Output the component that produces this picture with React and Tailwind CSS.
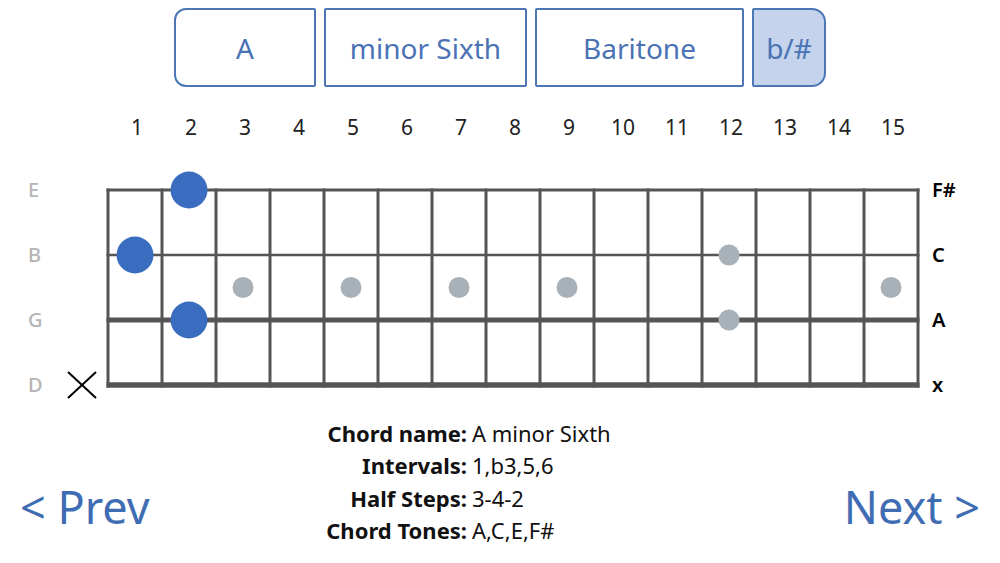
import React from 'react';

const FRETS = Array.from({ length: 15 }, (_, i) => i + 1);
const LEFT_STRINGS = ['E', 'B', 'G', 'D'];
const RIGHT_NOTES = ['F#', 'C', 'A', 'x'];

// svg coords: fretboard starts at x=42, each fret 54 wide, strings every 65
const fx = (f) => 42 + 54 * (f - 0.5);
const STRING_Y = [30, 95, 160, 225];

const fingered = [
  { fret: 2, string: 0 },
  { fret: 1, string: 1 },
  { fret: 2, string: 2 },
];

const inlays = [
  { x: fx(3), y: 127.5 },
  { x: fx(5), y: 127.5 },
  { x: fx(7), y: 127.5 },
  { x: fx(9), y: 127.5 },
  { x: fx(12), y: 95 },
  { x: fx(12), y: 160 },
  { x: fx(15), y: 127.5 },
];

const info = [
  ['Chord name:', 'A minor Sixth'],
  ['Intervals:', '1,b3,5,6'],
  ['Half Steps:', '3-4-2'],
  ['Chord Tones:', 'A,C,E,F#'],
];

function Fretboard() {
  const stringWidths = [3, 2.5, 5, 5.5];
  return (
    <svg width="864" height="240" viewBox="0 0 864 240" className="shrink-0">
      {FRETS.concat([16]).map((f) => (
        <line
          key={f}
          x1={42 + 54 * (f - 1)}
          x2={42 + 54 * (f - 1)}
          y1={28.5}
          y2={227.5}
          stroke="#555555"
          strokeWidth="3"
        />
      ))}
      {STRING_Y.map((y, i) => (
        <line key={y} x1={40.5} x2={853.5} y1={y} y2={y} stroke="#555555" strokeWidth={stringWidths[i]} />
      ))}
      {inlays.map((d, i) => (
        <circle key={i} cx={d.x} cy={d.y} r="10.5" fill="#a9b1b8" />
      ))}
      {fingered.map((d, i) => (
        <circle key={i} cx={fx(d.fret)} cy={STRING_Y[d.string]} r="18.5" fill="#3a6dbf" />
      ))}
      <line x1="2" y1="212" x2="30" y2="238" stroke="#000" strokeWidth="2" />
      <line x1="30" y1="212" x2="2" y2="238" stroke="#000" strokeWidth="2" />
    </svg>
  );
}

export default function App() {
  return (
    <div
      className="w-[1000px] h-[563px] bg-white overflow-hidden"
      style={{ fontFamily: '"Noto Sans", "Open Sans", sans-serif' }}
    >
      {/* selectors */}
      <div className="flex justify-center gap-[8px] pt-[8px]">
        <div className="w-[142px] h-[79px] border-2 border-[#4c76b6] rounded-l-[12px] rounded-r-[2px] flex items-center justify-center text-[28px] text-[#4a72b4]">
          A
        </div>
        <div className="w-[203px] h-[79px] border-2 border-[#4c76b6] rounded-[2px] flex items-center justify-center text-[28px] text-[#4a72b4]">
          minor Sixth
        </div>
        <div className="w-[209px] h-[79px] border-2 border-[#4c76b6] rounded-[2px] flex items-center justify-center text-[28px] text-[#4a72b4]">
          Baritone
        </div>
        <div className="w-[74px] h-[79px] border-2 border-[#4c76b6] bg-[#c5d4ec] rounded-r-[14px] rounded-l-[2px] flex items-center justify-center text-[28px] text-[#4a72b4]">
          b/#
        </div>
      </div>

      {/* fret numbers */}
      <div className="flex pl-[110px] mt-[26px] h-[28px]">
        {FRETS.map((f) => (
          <div key={f} className="w-[54px] text-center text-[21px] leading-[28px] text-[#222]">
            {f}
          </div>
        ))}
      </div>

      {/* fretboard */}
      <div className="flex mt-[19px] h-[240px]">
        <div className="w-[66px] shrink-0 flex flex-col gap-[35px] pt-[15px]">
          {LEFT_STRINGS.map((s) => (
            <div key={s} className="h-[30px] flex items-center pl-[28px] text-[20px] font-medium text-[#b5b5b5]">
              {s}
            </div>
          ))}
        </div>
        <Fretboard />
        <div className="flex flex-col gap-[35px] pt-[15px] pl-[2px]">
          {RIGHT_NOTES.map((n) => (
            <div key={n} className="h-[30px] flex items-center text-[20px] font-semibold text-black">
              {n}
            </div>
          ))}
        </div>
      </div>

      {/* bottom: prev / info / next */}
      <div className="flex mt-[17px]">
        <div className="w-[300px] pl-[20px] pt-[64px]">
          <div className="text-[45px] leading-[52px] text-[#3f6db3]">&lt; Prev</div>
        </div>
        <div className="flex gap-[5px] text-[22px] leading-[32.3px] text-[#111]">
          <div className="w-[167px] text-right font-bold">
            {info.map(([k]) => (
              <div key={k}>{k}</div>
            ))}
          </div>
          <div>
            {info.map(([k, v]) => (
              <div key={k}>{v}</div>
            ))}
          </div>
        </div>
        <div className="flex-1 flex justify-end pr-[20px] pt-[64px]">
          <div className="text-[45px] leading-[52px] text-[#3f6db3]">Next &gt;</div>
        </div>
      </div>
    </div>
  );
}
